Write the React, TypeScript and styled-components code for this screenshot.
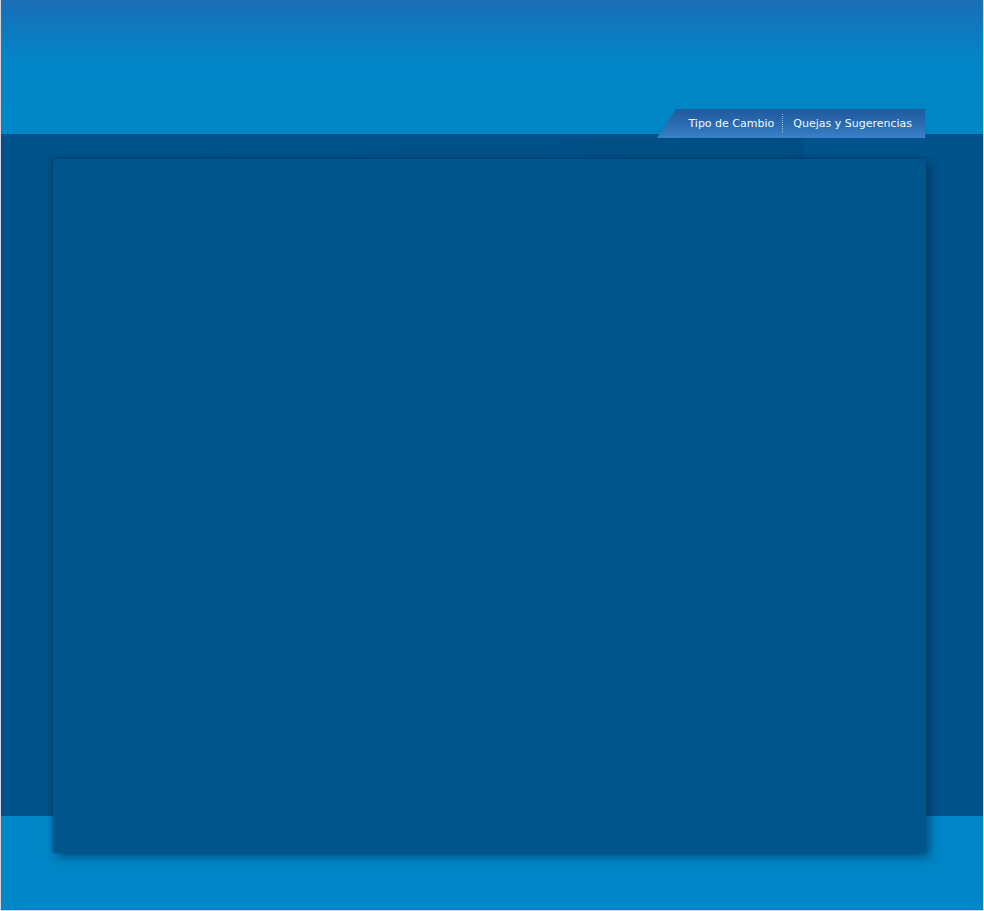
import React from "react";
import styled, { createGlobalStyle } from "styled-components";

const Global = createGlobalStyle`
  html, body { margin: 0; padding: 0; background: #ffffff; }
  #root { width: 984px; height: 911px; }
`;

const Page = styled.div`
  box-sizing: border-box;
  width: 984px;
  height: 911px;
  border-left: 1px solid #d4d8dc;
  border-right: 1px solid #d4d8dc;
  border-bottom: 1px solid #d4d8dc;
  overflow: hidden;
  display: flex;
  flex-direction: column;
  background:
    linear-gradient(
      to bottom,
      #1b6eb6 0px,
      #0e7abf 30px,
      #0285c6 62px,
      #0086c6 134px,
      #00538b 134px,
      #00538b 816px,
      #0086c6 816px,
      #0086c6 911px
    );
`;

const Header = styled.div`
  height: 134px;
  display: flex;
  justify-content: flex-end;
  align-items: flex-end;
  padding-right: 58px;
  position: relative;
  z-index: 2;
`;

const TabStrip = styled.nav`
  width: 268px;
  height: 29px;
  margin-bottom: -4px;
  display: flex;
  align-items: center;
  justify-content: flex-end;
  padding-right: 13px;
  padding-bottom: 1px;
  box-sizing: border-box;
  clip-path: polygon(19px 0, 100% 0, 100% 100%, 0 100%);
  background: linear-gradient(to bottom, #1f5a9c 0%, #2a6cb2 55%, #3a82c8 100%);
`;

const TabLink = styled.span`
  font-family: "DejaVu Sans", Verdana, sans-serif;
  font-size: 11px;
  color: #f4f8fc;
  white-space: nowrap;
  line-height: 1;
`;

const Divider = styled.span`
  width: 0;
  height: 19px;
  border-left: 1px dotted rgba(200, 220, 240, 0.7);
  margin: 0 10px 0 8px;
`;

const Lip = styled.div`
  height: 21px;
  width: 751px;
  margin-left: 52px;
  margin-top: 4px;
  background: linear-gradient(to right, rgba(0, 0, 0, 0) 0%, rgba(0, 0, 0, 0.03) 70%, rgba(0, 0, 0, 0.07) 100%);
`;

const Panel = styled.main`
  width: 873px;
  height: 694px;
  margin-left: 52px;
  background: #00558c;
  box-shadow:
    -2px -1px 3px rgba(0, 20, 50, 0.22),
    4px 4px 9px rgba(0, 20, 50, 0.45);
`;

export default function App() {
  return (
    <>
      <Global />
      <Page>
        <Header>
          <TabStrip>
            <TabLink>Tipo de Cambio</TabLink>
            <Divider />
            <TabLink>Quejas y Sugerencias</TabLink>
          </TabStrip>
        </Header>
        <Lip />
        <Panel />
      </Page>
    </>
  );
}
